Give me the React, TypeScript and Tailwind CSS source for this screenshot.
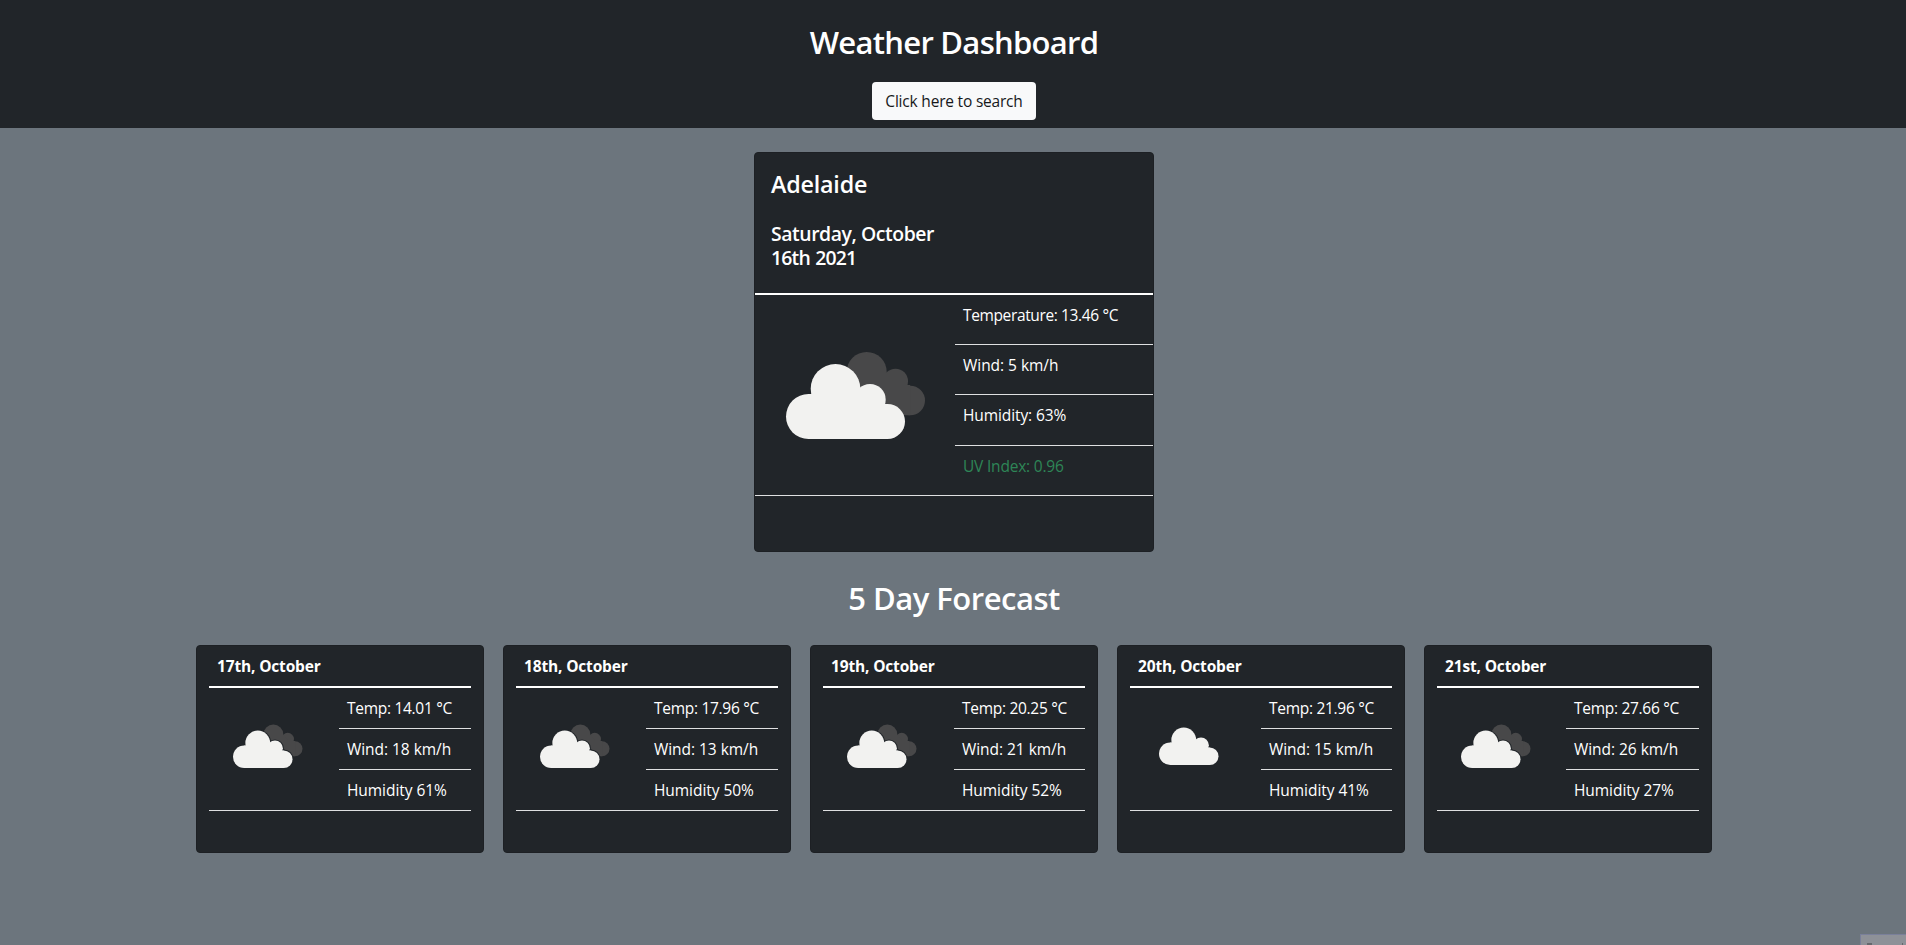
type Sky = "broken" | "scattered";

type Day = {
  date: string;
  temp: string;
  wind: string;
  humidity: string;
  sky: Sky;
  iconWidth: string;
};

const forecast: Day[] = [
  { date: "17th, October", temp: "14.01", wind: "18", humidity: "61", sky: "broken", iconWidth: "w-[130px]" },
  { date: "18th, October", temp: "17.96", wind: "13", humidity: "50", sky: "broken", iconWidth: "w-[130px]" },
  { date: "19th, October", temp: "20.25", wind: "21", humidity: "52", sky: "broken", iconWidth: "w-[131px]" },
  { date: "20th, October", temp: "21.96", wind: "15", humidity: "41", sky: "scattered", iconWidth: "w-[131px]" },
  { date: "21st, October", temp: "27.66", wind: "26", humidity: "27", sky: "broken", iconWidth: "w-[129px]" },
];

function FrontCloud() {
  return (
    <>
      <circle cx="28.5" cy="71.5" r="22.5" />
      <circle cx="55.5" cy="43.8" r="24.8" />
      <circle cx="90" cy="54.7" r="15.7" />
      <circle cx="107.5" cy="76.5" r="17.5" />
      <path d="M28.5 49H55V44H90V59H107.5V94H28.5Z" />
    </>
  );
}

function CloudIcon({ sky, outlined, className }: { sky: Sky; outlined?: boolean; className: string }) {
  return (
    <svg viewBox="0 0 146 96" className={className} aria-hidden="true">
      {sky === "broken" && (
        <g fill="#484849">
          <circle cx="86.7" cy="27" r="20" />
          <circle cx="115.5" cy="36.2" r="12.5" />
          <circle cx="130.2" cy="55.5" r="14.8" />
          <path d="M86 28H107L116 40H130.2V70.3H86Z" />
        </g>
      )}
      {outlined && sky === "broken" && (
        <g fill="#212529" stroke="#212529" strokeWidth="4">
          <FrontCloud />
        </g>
      )}
      <g fill="#f2f2f0">
        <FrontCloud />
      </g>
    </svg>
  );
}

function CurrentWeather() {
  return (
    <section className="flex h-[400px] w-[400px] flex-col rounded border border-[#1d2024] bg-[#212529]">
      <div className="flex h-[140px] flex-col px-4 pt-4">
        <h2 className="text-[23.3px] leading-[30px] font-semibold tracking-[-0.2px]">Adelaide</h2>
        <h3 className="mt-[23px] text-[19.4px] leading-6 font-semibold">
          <span className="block tracking-[-0.43px]">Saturday, October</span>
          <span className="block tracking-[-0.8px] [word-spacing:1px]">16th 2021</span>
        </h3>
      </div>
      <div className="flex border-t-2 border-b border-t-white border-b-[#dfe0e1]">
        <div className="w-[200px] pt-[50px] pl-[25px]">
          <CloudIcon sky="broken" className="h-24 w-[146px]" />
        </div>
        <div className="flex flex-1 flex-col">
          <p className="h-[50px] border-b border-[#dfe0e1] p-2 tracking-[-0.37px]">Temperature: 13.46 °C</p>
          <p className="h-[50px] border-b border-[#dfe0e1] p-2 tracking-[-0.04px]">Wind: 5 km/h</p>
          <p className="h-[51px] border-b border-[#dfe0e1] p-2 tracking-[-0.1px]">Humidity: 63%</p>
          <p className="h-[49px] p-2 tracking-[-0.2px] text-[#2e8557]">UV Index: 0.96</p>
        </div>
      </div>
    </section>
  );
}

function ForecastCard({ day }: { day: Day }) {
  return (
    <article className="h-52 w-72 rounded border border-[#1d2024] bg-[#212529] px-3">
      <h3 className="h-10 p-2 font-bold tracking-[-0.16px]">{day.date}</h3>
      <div className="flex border-t-2 border-b border-t-white border-b-[#dfe0e1]">
        <div className={day.iconWidth}>
          <div className={day.sky === "broken" ? "pt-[33px] pl-[21px]" : "pt-[30px] pl-[26px]"}>
            <CloudIcon sky={day.sky} outlined className="h-12 w-[73px]" />
          </div>
        </div>
        <div className="flex-1">
          <p className="h-[41px] border-b border-[#dfe0e1] p-2 tracking-[-0.29px]">Temp: {day.temp} °C</p>
          <p className="h-[41px] border-b border-[#dfe0e1] p-2 tracking-[-0.05px]">Wind: {day.wind} km/h</p>
          <p className="h-10 p-2 tracking-[-0.06px]">Humidity {day.humidity}%</p>
        </div>
      </div>
    </article>
  );
}

export default function App() {
  return (
    <div className="relative flex h-[945px] flex-col overflow-hidden bg-[#6c757d] font-['Open_Sans','Noto_Sans',sans-serif] text-[15.5px] leading-6 text-white">
      <header className="flex h-32 flex-col items-center bg-[#212529] pt-[23px] pl-0.5">
        <h1 className="text-[31px] leading-[38px] font-semibold tracking-[-0.72px]">Weather Dashboard</h1>
        <button className="mt-[21px] h-[38px] w-[164px] rounded bg-[#f8f9fa] tracking-[-0.2px] text-[#16181b]">
          Click here to search
        </button>
      </header>
      <main className="flex flex-col items-center pt-6 pl-0.5">
        <CurrentWeather />
        <h2 className="mt-[27px] text-[31px] leading-[38px] font-semibold tracking-[-0.5px]">5 Day Forecast</h2>
        <div className="mt-7 flex gap-[19px]">
          {forecast.map((day) => (
            <ForecastCard key={day.date} day={day} />
          ))}
        </div>
      </main>
      <div className="absolute right-0 bottom-0 flex h-[11px] w-[46px] items-end justify-between border-t border-l border-[#7a809a] bg-[#8e9198] pr-[3px] pl-1.5">
        <span className="h-0.5 w-[5px] bg-[#66686d]" />
        <span className="h-0.5 w-px bg-[#66686d]" />
      </div>
    </div>
  );
}
